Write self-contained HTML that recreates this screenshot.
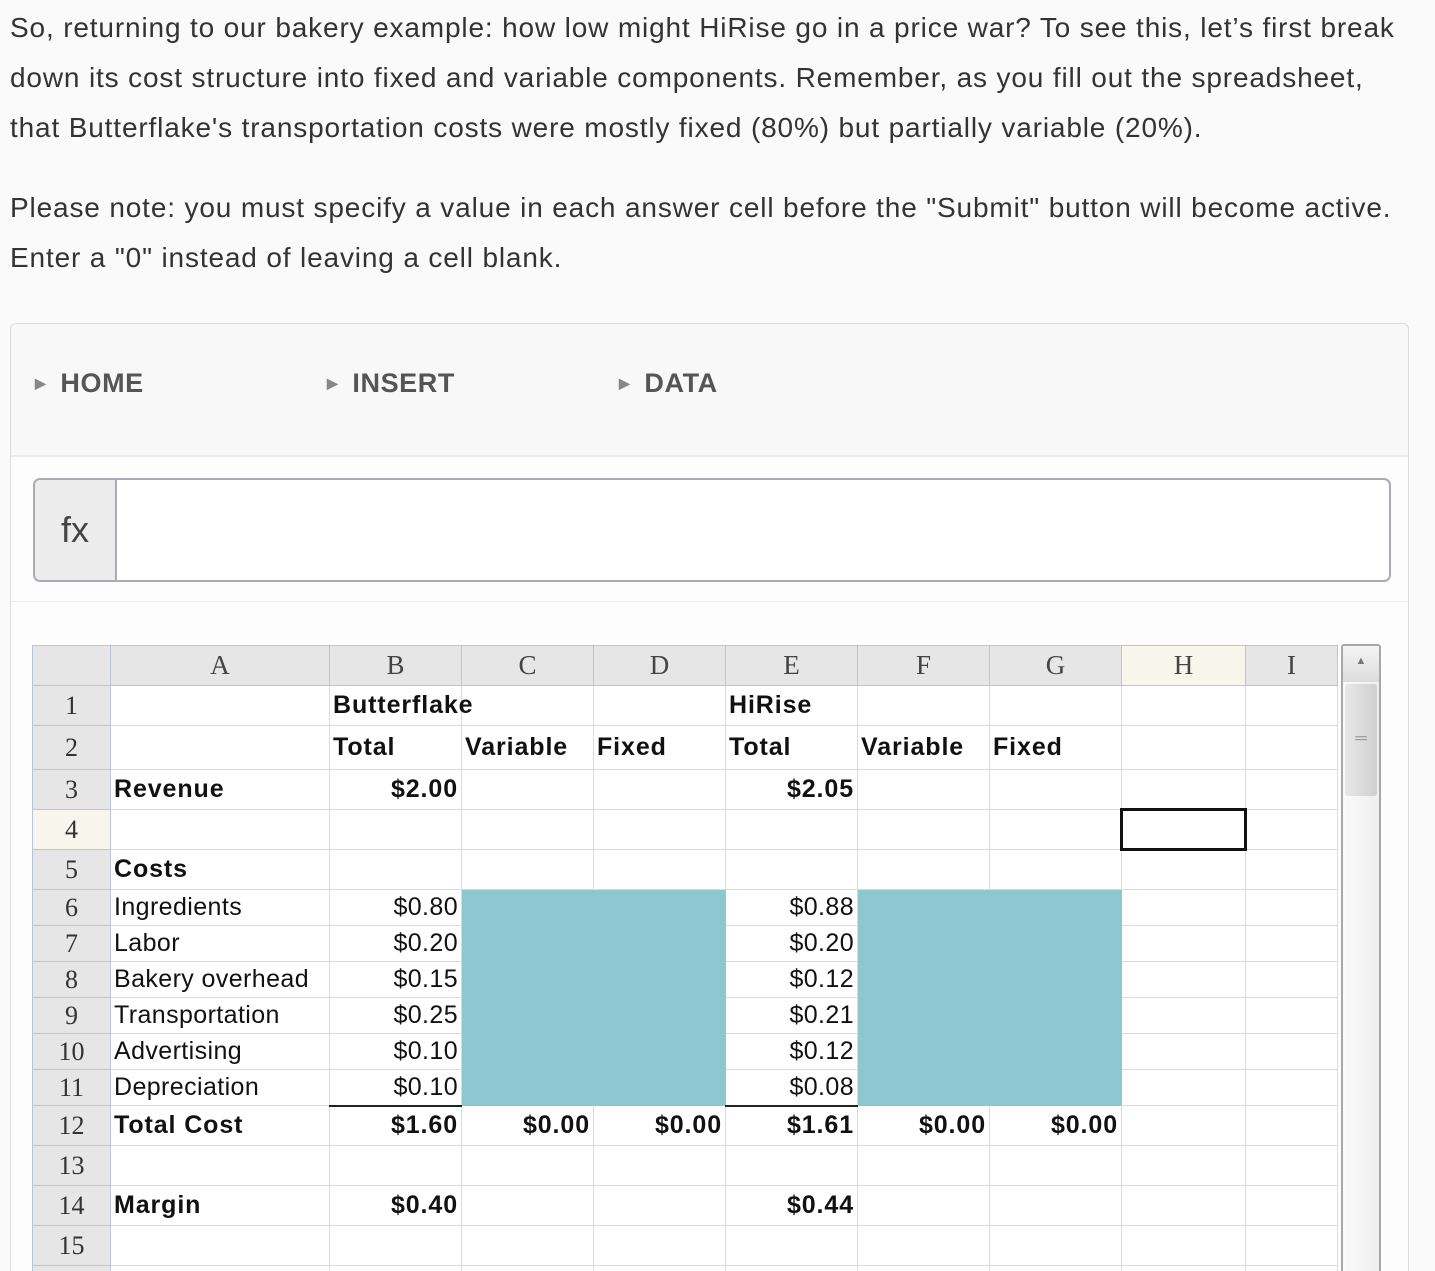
<!DOCTYPE html>
<html><head><meta charset="utf-8"><style>
html,body{margin:0;padding:0;background:#fafafa;width:1435px;height:1271px;overflow:hidden;position:relative;font-family:"Liberation Sans",Arial,sans-serif;}
.p{position:absolute;left:10px;font-size:28px;letter-spacing:0.85px;color:#333;line-height:50px;margin:0;white-space:nowrap}
.panel{position:absolute;left:10px;top:323px;width:1397px;height:1000px;border:1px solid #dcdcdc;border-radius:6px;background:#fdfdfd}
.tabs{position:absolute;left:0;top:0;width:1397px;height:131px;background:#f8f8f8;border-bottom:2px solid #ececec;border-radius:6px 6px 0 0}
.tab{position:absolute;top:44px;font-weight:bold;font-size:27px;letter-spacing:0.6px;color:#555}
.tab i{font-style:normal;font-size:14px;color:#888;margin-right:14px;position:relative;top:-4px}
.fx{position:absolute;left:22px;top:154px;width:1354px;height:100px;border:2px solid #a9acb6;border-radius:7px;background:#fff;overflow:hidden}
.fx div{position:absolute;left:0;top:0;width:80px;height:100px;background:#ececec;border-right:2px solid #a9acb6;font-size:36px;color:#444;text-align:center;line-height:100px}
.sep{position:absolute;left:0;top:277px;width:1397px;height:1px;background:#ececec}
table{position:absolute;left:32px;top:645px;width:1305px;border-collapse:collapse;table-layout:fixed;background:#fff}
td{border:1px solid #d3dcea;padding:0 3px;font-size:25px;letter-spacing:0.4px;color:#111;white-space:nowrap;overflow:hidden}
tr.h td{background:#e6e6e6;border-color:#b7c6da;text-align:center;font-family:"Liberation Serif",serif;font-size:27px;color:#444;letter-spacing:0}
td.n{background:#e6e6e6;font-family:"Liberation Serif",serif;font-size:26px;color:#333;text-align:center;border-color:#b7c6da;letter-spacing:0}
.b{font-weight:bold;font-size:25px;letter-spacing:0.9px}
.r{text-align:right}
.t{background:#8ec7cf;border-color:#8ec7cf}
.tl{border-top:2px solid #222}
</style></head><body>
<p class="p" style="top:3px">So, returning to our bakery example: how low might HiRise go in a price war? To see this, let’s first break</p>
<p class="p" style="top:53px">down its cost structure into fixed and variable components. Remember, as you fill out the spreadsheet,</p>
<p class="p" style="top:103px">that Butterflake's transportation costs were mostly fixed (80%) but partially variable (20%).</p>
<p class="p" style="top:183px">Please note: you must specify a value in each answer cell before the "Submit" button will become active.</p>
<p class="p" style="top:233px">Enter a "0" instead of leaving a cell blank.</p>
<div class="panel">
<div class="tabs">
<div class="tab" style="left:24px"><i>▶</i>HOME</div>
<div class="tab" style="left:316px"><i>▶</i>INSERT</div>
<div class="tab" style="left:608px"><i>▶</i>DATA</div>
</div>
<div class="fx"><div>fx</div></div>
<div class="sep"></div>
</div>
<table>
<colgroup><col style="width:78px"><col style="width:219px"><col style="width:132px"><col style="width:132px"><col style="width:132px"><col style="width:132px"><col style="width:132px"><col style="width:132px"><col style="width:124px"><col style="width:92px"></colgroup>
<tr class="h" style="height:40px"><td></td><td>A</td><td>B</td><td>C</td><td>D</td><td>E</td><td>F</td><td>G</td><td style="background:#f8f6ec">H</td><td>I</td></tr>
<tr style="height:40px"><td class="n">1</td><td></td><td class="b" style="overflow:visible">Butterflake</td><td style="border-left-color:transparent"></td><td></td><td class="b">HiRise</td><td></td><td></td><td></td><td></td></tr>
<tr style="height:44px"><td class="n">2</td><td></td><td class="b">Total</td><td class="b">Variable</td><td class="b">Fixed</td><td class="b">Total</td><td class="b">Variable</td><td class="b">Fixed</td><td></td><td></td></tr>
<tr style="height:40px"><td class="n">3</td><td class="b">Revenue</td><td class="b r">$2.00</td><td></td><td></td><td class="b r">$2.05</td><td></td><td></td><td></td><td></td></tr>
<tr style="height:40px"><td class="n" style="background:#f8f6ec">4</td><td></td><td></td><td></td><td></td><td></td><td></td><td></td><td style="border:3px solid #111"></td><td></td></tr>
<tr style="height:40px"><td class="n">5</td><td class="b">Costs</td><td></td><td></td><td></td><td></td><td></td><td></td><td></td><td></td></tr>
<tr style="height:36px"><td class="n">6</td><td>Ingredients</td><td class="r">$0.80</td><td class="t"></td><td class="t"></td><td class="r">$0.88</td><td class="t"></td><td class="t"></td><td></td><td></td></tr>
<tr style="height:36px"><td class="n">7</td><td>Labor</td><td class="r">$0.20</td><td class="t"></td><td class="t"></td><td class="r">$0.20</td><td class="t"></td><td class="t"></td><td></td><td></td></tr>
<tr style="height:36px"><td class="n">8</td><td>Bakery overhead</td><td class="r">$0.15</td><td class="t"></td><td class="t"></td><td class="r">$0.12</td><td class="t"></td><td class="t"></td><td></td><td></td></tr>
<tr style="height:36px"><td class="n">9</td><td>Transportation</td><td class="r">$0.25</td><td class="t"></td><td class="t"></td><td class="r">$0.21</td><td class="t"></td><td class="t"></td><td></td><td></td></tr>
<tr style="height:36px"><td class="n">10</td><td>Advertising</td><td class="r">$0.10</td><td class="t"></td><td class="t"></td><td class="r">$0.12</td><td class="t"></td><td class="t"></td><td></td><td></td></tr>
<tr style="height:36px"><td class="n">11</td><td>Depreciation</td><td class="r">$0.10</td><td class="t"></td><td class="t"></td><td class="r">$0.08</td><td class="t"></td><td class="t"></td><td></td><td></td></tr>
<tr style="height:40px"><td class="n">12</td><td class="b">Total Cost</td><td class="b r tl">$1.60</td><td class="b r">$0.00</td><td class="b r">$0.00</td><td class="b r tl">$1.61</td><td class="b r">$0.00</td><td class="b r">$0.00</td><td></td><td></td></tr>
<tr style="height:40px"><td class="n">13</td><td></td><td></td><td></td><td></td><td></td><td></td><td></td><td></td><td></td></tr>
<tr style="height:40px"><td class="n">14</td><td class="b">Margin</td><td class="b r">$0.40</td><td></td><td></td><td class="b r">$0.44</td><td></td><td></td><td></td><td></td></tr>
<tr style="height:40px"><td class="n">15</td><td></td><td></td><td></td><td></td><td></td><td></td><td></td><td></td><td></td></tr>
<tr style="height:40px"><td class="n"></td><td></td><td></td><td></td><td></td><td></td><td></td><td></td><td></td><td></td></tr>
</table>
<div style="position:absolute;left:1341px;top:644px;width:36px;height:640px;border:2px solid #a8a8a8;border-radius:3px;background:linear-gradient(90deg,#fafafa,#efefef)">
<div style="position:absolute;left:0;top:0;width:36px;height:36px;background:linear-gradient(#f4f4f4,#dcdcdc);text-align:center;font-size:11px;color:#777;line-height:30px">▲</div>
<div style="position:absolute;left:2px;top:38px;width:32px;height:112px;border-radius:3px;background:linear-gradient(90deg,#e8e8e8,#cfcfcf);text-align:center;color:#999;font-size:16px;line-height:110px">═</div>
</div>
</body></html>
